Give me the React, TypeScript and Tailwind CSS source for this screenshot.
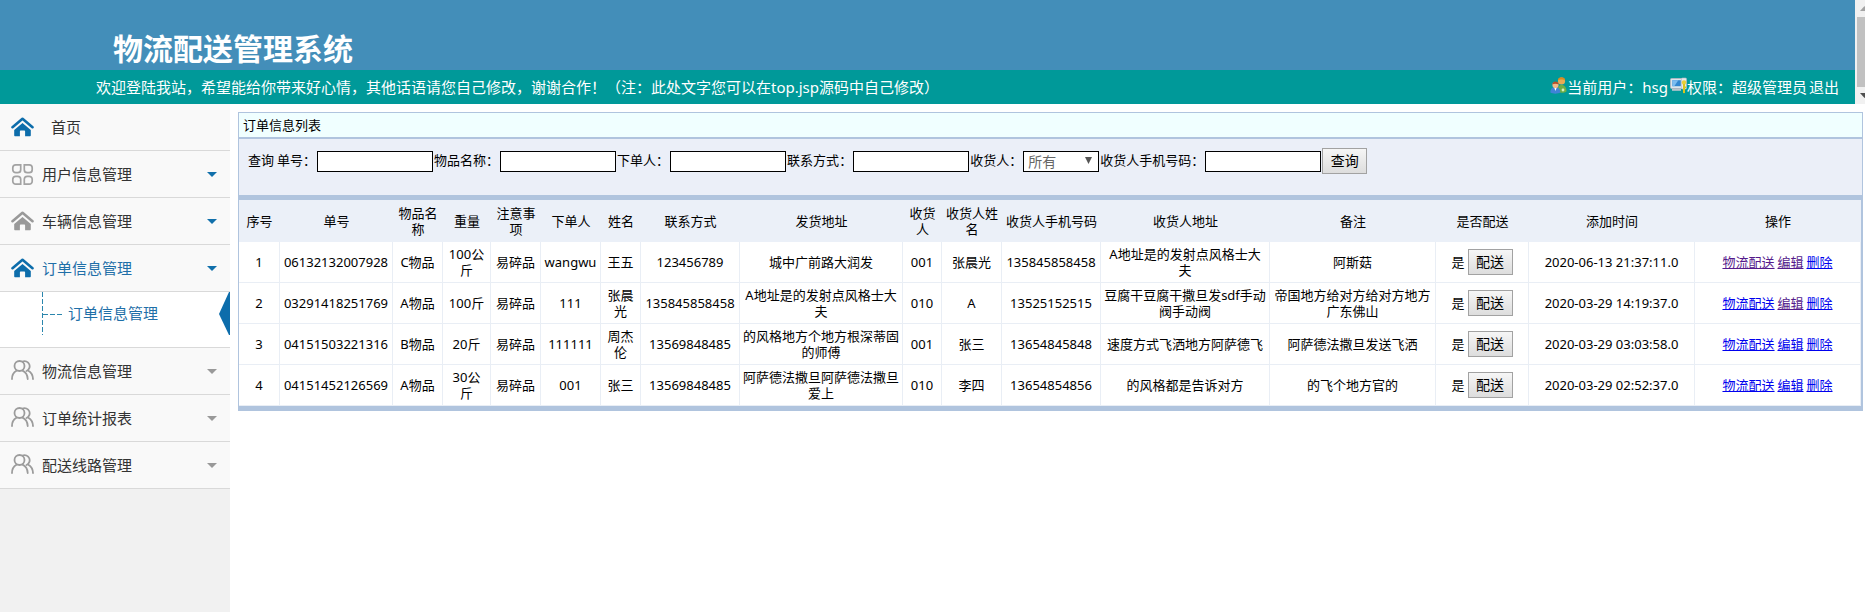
import { useState } from 'react';

type IconName = 'home' | 'grid' | 'users';

interface MenuItem {
  label: string;
  icon: IconName;
  blue?: boolean;
  caret?: 'blue' | 'gray';
  children?: string[];
}

interface Order {
  id: string;
  goods: string;
  weight: string;
  note: string;
  buyer: string;
  name: string;
  phone: string;
  from: string;
  receiver: string;
  receiverName: string;
  receiverPhone: string;
  to: string;
  remark: string;
  time: string;
  visited: string[];
}

const menu: MenuItem[] = [
  { label: '首页', icon: 'home', blue: true },
  { label: '用户信息管理', icon: 'grid', caret: 'blue' },
  { label: '车辆信息管理', icon: 'home', caret: 'blue' },
  { label: '订单信息管理', icon: 'home', blue: true, caret: 'blue', children: ['订单信息管理'] },
  { label: '物流信息管理', icon: 'users', caret: 'gray' },
  { label: '订单统计报表', icon: 'users', caret: 'gray' },
  { label: '配送线路管理', icon: 'users', caret: 'gray' },
];

const columns: [string, string][] = [
  ['序号', 'w-[41px]'],
  ['单号', 'w-[113px]'],
  ['物品名称', 'w-[50px]'],
  ['重量', 'w-[48px]'],
  ['注意事项', 'w-[50px]'],
  ['下单人', 'w-[60px]'],
  ['姓名', 'w-[40px]'],
  ['联系方式', 'w-[99px]'],
  ['发货地址', 'w-[163px]'],
  ['收货人', 'w-[39px]'],
  ['收货人姓名', 'w-[60px]'],
  ['收货人手机号码', 'w-[99px]'],
  ['收货人地址', 'w-[169px]'],
  ['备注', ''],
  ['是否配送', 'w-[93px]'],
  ['添加时间', ''],
  ['操作', ''],
];

const orders: Order[] = [
  {
    id: '06132132007928', goods: 'C物品', weight: '100公斤', note: '易碎品', buyer: 'wangwu', name: '王五',
    phone: '123456789', from: '城中广前路大润发', receiver: '001', receiverName: '张晨光',
    receiverPhone: '135845858458', to: 'A地址是的发射点风格士大夫', remark: '阿斯菇',
    time: '2020-06-13 21:37:11.0', visited: ['物流配送', '编辑'],
  },
  {
    id: '03291418251769', goods: 'A物品', weight: '100斤', note: '易碎品', buyer: '111', name: '张晨光',
    phone: '135845858458', from: 'A地址是的发射点风格士大夫', receiver: '010', receiverName: 'A',
    receiverPhone: '13525152515', to: '豆腐干豆腐干撒旦发sdf手动阀手动阀', remark: '帝国地方给对方给对方地方广东佛山',
    time: '2020-03-29 14:19:37.0', visited: ['编辑'],
  },
  {
    id: '04151503221316', goods: 'B物品', weight: '20斤', note: '易碎品', buyer: '111111', name: '周杰伦',
    phone: '13569848485', from: '的风格地方个地方根深蒂固的师傅', receiver: '001', receiverName: '张三',
    receiverPhone: '13654845848', to: '速度方式飞洒地方阿萨德飞', remark: '阿萨德法撒旦发送飞洒',
    time: '2020-03-29 03:03:58.0', visited: [],
  },
  {
    id: '04151452126569', goods: 'A物品', weight: '30公斤', note: '易碎品', buyer: '001', name: '张三',
    phone: '13569848485', from: '阿萨德法撒旦阿萨德法撒旦爱上', receiver: '010', receiverName: '李四',
    receiverPhone: '13654854856', to: '的风格都是告诉对方', remark: '的飞个地方官的',
    time: '2020-03-29 02:52:37.0', visited: [],
  },
];

const buttonClass =
  'h-[26px] w-[45px] shrink-0 border border-[#a2a2a2] bg-linear-to-b from-[#f6f6f6] to-[#dddddd] text-[14px] leading-[22px] text-black';

function MenuIcon({ name, blue }: { name: IconName; blue?: boolean }) {
  const color = blue ? '#0d6dab' : '#999999';
  if (name === 'home') {
    return (
      <svg width="23" height="20" viewBox="0 0 23 20" fill="none" aria-hidden="true">
        <path d="M1.5 10.2 11.5 1.8l10 8.4" stroke={color} strokeWidth="2.6" strokeLinecap="round" strokeLinejoin="round" />
        <path d="M11.5 6 3.2 13v5.2c0 .7.4 1.1 1.1 1.1h4.6v-4.8c0-.6.4-1 1-1h3.2c.6 0 1 .4 1 1v4.8h4.6c.7 0 1.1-.4 1.1-1.1V13z" fill={color} />
      </svg>
    );
  }
  if (name === 'grid') {
    return (
      <svg width="23" height="23" viewBox="0 0 23 23" fill="none" stroke="#a3a3a3" strokeWidth="1.7" aria-hidden="true">
        <path d="M4.8 1.8h4.9v4.9a3 3 0 0 1-3 3H4.8a3 3 0 0 1-3-3V4.8a3 3 0 0 1 3-3z" />
        <path d="M13.3 1.8h4.9a3 3 0 0 1 3 3v1.9a3 3 0 0 1-3 3h-1.9a3 3 0 0 1-3-3z" />
        <path d="M4.8 13.3h1.9a3 3 0 0 1 3 3v4.9H4.8a3 3 0 0 1-3-3v-1.9a3 3 0 0 1 3-3z" />
        <path d="M16.3 13.3h1.9a3 3 0 0 1 3 3v1.9a3 3 0 0 1-3 3h-4.9v-4.9a3 3 0 0 1 3-3z" />
      </svg>
    );
  }
  return (
    <svg width="23" height="22" viewBox="0 0 23 22" fill="none" stroke="#9c9c9c" strokeWidth="1.8" strokeLinecap="round" aria-hidden="true">
      <circle cx="8.5" cy="6" r="5" />
      <path d="M11.5 1.5A5 5 0 1 1 15.500 11" />
      <path d="M1 19c0-4 1.700-6.800 4.500-8.300M11.500 10.700c3 1.300 5 4.500 5.200 8.300" />
      <path d="M17.300 10.700c2.800 1.500 4.500 4.300 4.700 8.300" />
    </svg>
  );
}

function UsersIcon() {
  return (
    <svg className="mb-1" width="17" height="17" viewBox="0 0 17 17" aria-hidden="true">
      <path d="M7.500 14.500c0-4 1.200-6.500 4-6.500 3.200 0 5 2.500 5 6.500-2 1.800-7 1.800-9 0z" fill="#6fae45" />
      <circle cx="11.500" cy="4" r="3.600" fill="#e9ab55" />
      <path d="M7.900 3.600C8 1.200 9.500.2 11.500.2s3.600 1 3.600 3.400c-1.500-1.200-5.500-1.400-7.200 0z" fill="#d98a1e" />
      <path d="M.3 15.500c0-3.500 1.700-5.500 5-5.500s5 2 5 5.500c-2.500 1.500-7.500 1.500-10 0z" fill="#3f83d6" />
      <path d="m4 10 1.400 4L7 10z" fill="#ffffff" />
      <circle cx="5.500" cy="8" r="3.100" fill="#f2b98a" />
      <path d="M2.300 7.600C2.400 5.500 3.800 4.600 5.500 4.600s3.100.9 3.200 3c-1.500-1-4.900-1-6.400 0z" fill="#b4502a" />
      <circle cx="13" cy="13" r="1.400" fill="#d8efc0" />
    </svg>
  );
}

function ComputerIcon() {
  return (
    <svg className="mb-1" width="17" height="17" viewBox="0 0 17 17" aria-hidden="true">
      <rect x=".5" y="1.500" width="12.500" height="10" rx="1" fill="#dce5ec" stroke="#a9b7c2" />
      <rect x="2.300" y="3.200" width="8.500" height="6" fill="#3187d0" />
      <path d="M2.300 3.200h6l-4 6h-2z" fill="#7cbcf0" />
      <rect x="2" y="12" width="9" height="1.800" fill="#b9c4cc" />
      <rect x="11.500" y="1" width="5" height="11" rx="1" fill="#e6e9ec" stroke="#b2bbc2" strokeWidth=".6" />
      <circle cx="14" cy="5.500" r="2.200" fill="#e8cf3a" />
      <path d="M13 7h2v8.200l-1 1.300-1-1.300z" fill="#d9c51e" />
      <path d="M15 9.500h1.200V11H15z" fill="#d9c51e" />
    </svg>
  );
}

function Header() {
  return (
    <div className="flex">
      <header className="min-w-0 flex-1 text-white">
        <div className="flex h-[70px] items-end bg-[#438eb9] pl-[113px]">
          <h1 className="text-[30px] leading-[42px] font-bold">物流配送管理系统</h1>
        </div>
        <div className="flex h-[34px] items-center justify-between bg-[#009999] pr-4 pl-24 text-[15px] leading-[22px]">
          <p>欢迎登陆我站，希望能给你带来好心情，其他话语请您自己修改，谢谢合作！（注：此处文字您可以在top.jsp源码中自己修改）</p>
          <div className="flex items-center gap-[2px]">
            <span className="flex items-center"><UsersIcon />当前用户：hsg</span>
            <span className="flex items-center"><ComputerIcon />权限：超级管理员</span>
            <a href="#logout">退出</a>
          </div>
        </div>
      </header>
      {/* scroll bar of the top frame */}
      <div className="flex w-[10px] flex-col justify-between overflow-hidden bg-[#f1f1f1] pl-[2px]" aria-hidden="true">
        <svg className="mt-[6px] ml-[3px]" width="9" height="5" viewBox="0 0 9 5"><path d="M0 5l4.500-5L9 5z" fill="#a3a3a3" /></svg>
        <div className="my-[6px] flex-1 bg-[#c1c1c1]" />
        <svg className="mb-[6px] ml-[3px]" width="9" height="5" viewBox="0 0 9 5"><path d="M0 0l4.500 5L9 0z" fill="#505050" /></svg>
      </div>
    </div>
  );
}

function Sidebar() {
  const [open, setOpen] = useState('订单信息管理');

  return (
    <nav className="w-[230px] shrink-0 bg-[#f1f1f1] text-[15px] text-[#333333]">
      {menu.map((item) => (
        <div key={item.label}>
          <button
            type="button"
            onClick={() => setOpen(open === item.label ? '' : item.label)}
            className={`flex h-[47px] w-full items-center border-b border-[#d9d9d9] bg-[#f9f9f9] pr-[13px] pl-[11px] text-left ${item.blue && item.caret ? 'text-[#1f6fa8]' : ''}`}
          >
            <MenuIcon name={item.icon} blue={item.blue} />
            <span className={`flex-1 ${item.caret ? 'pl-2' : 'pl-[17px]'}`}>{item.label}</span>
            {item.caret ? (
              <svg width="10" height="5" viewBox="0 0 10 5" aria-hidden="true">
                <path d="M0 0h10L5 5z" fill={item.caret === 'blue' ? '#1170ab' : '#999999'} />
              </svg>
            ) : null}
          </button>
          {item.children && open === item.label ? (
            <ul className="border-b border-[#d9d9d9] bg-white pb-3">
              {item.children.map((child) => (
                <li key={child} className="flex h-[43px] items-center pl-[42px] text-[#1f6fa8]">
                  <svg width="20" height="43" viewBox="0 0 20 43" fill="none" stroke="#2b86ad" aria-hidden="true">
                    <path d="M.5 0v43" strokeDasharray="5 2" />
                    <path d="M1 22.500h19" strokeDasharray="5 2" />
                  </svg>
                  <a href="#orders" className="flex-1 pl-[6px]">{child}</a>
                  <svg width="11" height="43" viewBox="0 0 11 43" aria-hidden="true"><path d="M11 0v43h-1L0 22 10 0z" fill="#0d6dab" /></svg>
                </li>
              ))}
            </ul>
          ) : null}
        </div>
      ))}
    </nav>
  );
}

function Field({ id, label }: { id: string; label: string }) {
  return (
    <>
      <label htmlFor={id}>{label}：</label>
      <input id={id} type="text" className="h-[21px] w-[116px] border border-black bg-white px-1" />
    </>
  );
}

function SearchBar() {
  return (
    <form className="flex h-14 items-start bg-[#ebeff8] px-[9px] pt-[9px]" onSubmit={(e) => e.preventDefault()}>
      <div className="flex items-center gap-px whitespace-nowrap">
        <span className="pr-[2px]">查询</span>
        <Field id="orderNo" label="单号" />
        <Field id="goods" label="物品名称" />
        <Field id="buyer" label="下单人" />
        <Field id="phone" label="联系方式" />
        <label htmlFor="receiver">收货人：</label>
        <span className="relative">
          <select id="receiver" className="block h-[21px] w-[76px] appearance-none border border-black bg-white pl-1 text-[14px] leading-[19px] text-[#666666]">
            <option>所有</option>
            <option>001</option>
            <option>010</option>
          </select>
          <svg className="pointer-events-none absolute top-[6px] right-[7px]" width="7" height="7" viewBox="0 0 7 7" aria-hidden="true">
            <path d="M0 0h7L3.500 7z" fill="#555555" />
          </svg>
        </span>
        <Field id="receiverPhone" label="收货人手机号码" />
        <button type="submit" className={buttonClass}>查询</button>
      </div>
    </form>
  );
}

function OrderTable() {
  return (
    <table className="w-full table-fixed border-separate border-spacing-0 border-y-[5px] border-r border-[#b0c4de] text-center leading-4">
      <thead>
        <tr>
          {columns.map(([label, width]) => (
            <th key={label} className={`h-[42px] bg-[#ebf0f8] px-[3px] font-normal ${width}`}>{label}</th>
          ))}
        </tr>
      </thead>
      <tbody className="[&_td]:h-[41px] [&_td]:border-r [&_td]:border-b [&_td]:border-[#e9eef5] [&_td]:px-[3px] [&_td:nth-child(4)]:px-[5px]">
        {orders.map((o, i) => (
          <tr key={o.id}>
            <td>{i + 1}</td>
            <td>{o.id}</td>
            <td>{o.goods}</td>
            <td>{o.weight}</td>
            <td>{o.note}</td>
            <td>{o.buyer}</td>
            <td>{o.name}</td>
            <td>{o.phone}</td>
            <td>{o.from}</td>
            <td>{o.receiver}</td>
            <td>{o.receiverName}</td>
            <td>{o.receiverPhone}</td>
            <td>{o.to}</td>
            <td>{o.remark}</td>
            <td>
              <div className="flex items-center justify-center gap-[3px]">
                是<button type="button" className={buttonClass}>配送</button>
              </div>
            </td>
            <td>{o.time}</td>
            <td>
              <div className="flex justify-center gap-[3px]">
                {['物流配送', '编辑', '删除'].map((text) => (
                  <a key={text} href={`#${o.id}`} className={`underline ${o.visited.includes(text) ? 'text-[#551a8b]' : 'text-[#0000ee]'}`}>
                    {text}
                  </a>
                ))}
              </div>
            </td>
          </tr>
        ))}
      </tbody>
    </table>
  );
}

export default function App() {
  return (
    <div className="flex min-h-screen flex-col bg-white font-['Noto_Sans','Noto_Sans_CJK_SC',sans-serif] text-black">
      <Header />
      <div className="flex flex-1">
        <Sidebar />
        <main className="min-w-0 flex-1 pt-2 pr-[2px] pl-2 text-[13px]">
          <section className="border-x border-t border-[#b0c4de]">
            <h2 className="h-[26px] border-b-2 border-[#b0c4de] bg-[#f0ffff] pl-1 leading-6">订单信息列表</h2>
            <SearchBar />
            <OrderTable />
          </section>
        </main>
      </div>
    </div>
  );
}
